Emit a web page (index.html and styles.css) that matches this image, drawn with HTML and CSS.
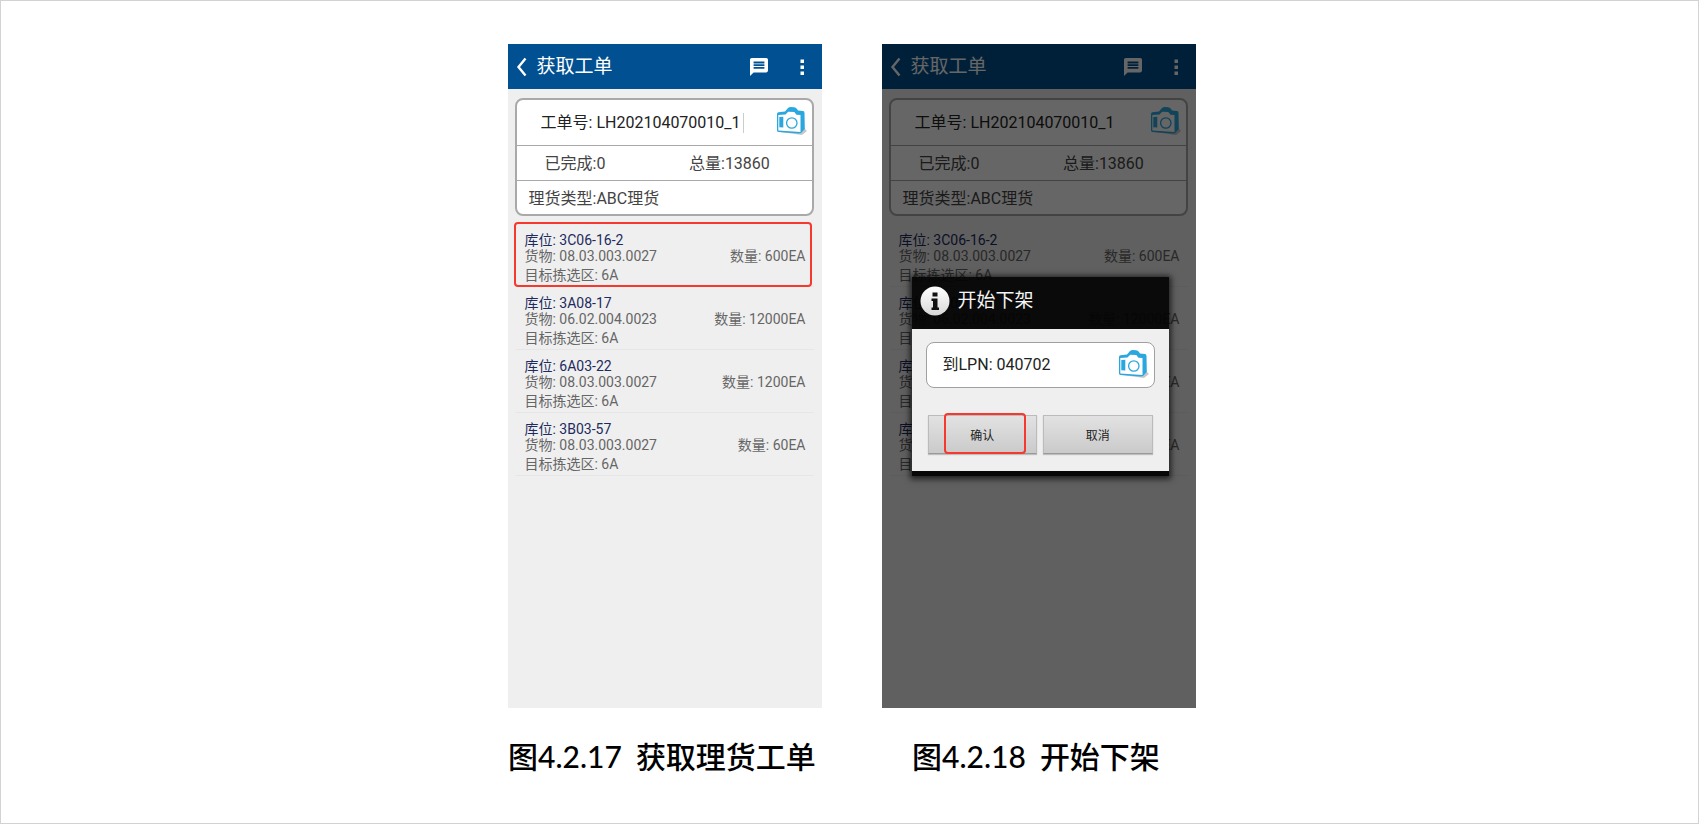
FILE: index.html
```
<!DOCTYPE html>
<html lang="zh-CN">
<head>
    <meta charset="UTF-8">
    <meta name="viewport" content="width=device-width, initial-scale=1.0">
    <title>获取工单</title>
    <link rel="stylesheet" href="styles.css">
</head>
<body>
    <!-- Общие иконки -->
    <svg class="sprite" aria-hidden="true">
        <symbol id="icon-back" viewBox="0 0 12 20">
            <path d="M9.5 1.5 L2.5 10 L9.5 18.5" fill="none" stroke="currentColor" stroke-width="2.4"/>
        </symbol>
        <symbol id="icon-message" viewBox="2 2 20 20">
            <path fill="currentColor" d="M20 2H4c-1.1 0-2 .9-2 2v18l4-4h14c1.1 0 2-.9 2-2V4c0-1.100-.9-2-2-2zm-2 12H6v-2h12v2zm0-3H6V9h12v2zm0-3H6V6h12v2z"/>
        </symbol>
        <symbol id="icon-more" viewBox="0 0 4 18">
            <path fill="currentColor" d="M.5 1.500h3.500V5H.5zM.5 7.500h3.500V11H.5zM.5 13.500h3.500V17H.5z"/>
        </symbol>
        <symbol id="icon-camera" viewBox="0 0 32 30">
            <path d="M4 26 L26 29 L31 25 L28 22 Z" fill="#000" opacity=".22"/>
            <path d="M1 8 Q1 6.500 2.500 6.300 L9 5.500 L12 2 Q13 1 15 1 L18 1.200 Q20 1.500 21 3 L22 4.500 L27 5 Q28.500 5.200 28.500 7 L28.800 23 L25 27 Q24 27.500 22.500 27.400 L2.500 26 Q1 25.800 1 24.500 Z" fill="#2ba7df"/>
            <path d="M2.300 9 L9.500 8.500 L12.200 5.700 L18.300 5.900 L20.500 8.800 L24.500 9 L24.500 26 L2.300 24.500 Z" fill="#fff"/>
            <path d="M3.300 11 L7.300 10.800 L7.300 21.500 L3.300 21.200 Z" fill="#2ba7df"/>
            <circle cx="15.800" cy="17" r="5.200" fill="#fff" stroke="#2ba7df" stroke-width="1.300"/>
        </symbol>
    </svg>

    <main>
        <figure>
            <div class="phone">
                <header>
                    <button type="button" class="icon-btn back" aria-label="返回"><svg><use href="#icon-back"/></svg></button>
                    <h1>获取工单</h1>
                    <button type="button" class="icon-btn message" aria-label="消息"><svg><use href="#icon-message"/></svg></button>
                    <button type="button" class="icon-btn more" aria-label="更多"><svg><use href="#icon-more"/></svg></button>
                </header>
                <section class="order">
                    <div class="order-row order-number">
                        <label for="order1">工单号:</label>
                        <input type="text" id="order1" class="active" value="LH202104070010_1">
                        <button type="button" class="icon-btn camera" aria-label="扫描"><svg><use href="#icon-camera"/></svg></button>
                    </div>
                    <div class="order-row order-total">
                        <span>已完成:0</span>
                        <span>总量:13860</span>
                    </div>
                    <div class="order-row order-type">理货类型:ABC理货</div>
                </section>
                <ul class="tasks">
                    <li class="marked">
                        <p class="place">库位: 3C06-16-2</p>
                        <p class="goods"><span>货物: 08.03.003.0027</span><span>数量: 600EA</span></p>
                        <p class="target">目标拣选区: 6A</p>
                    </li>
                    <li>
                        <p class="place">库位: 3A08-17</p>
                        <p class="goods"><span>货物: 06.02.004.0023</span><span>数量: 12000EA</span></p>
                        <p class="target">目标拣选区: 6A</p>
                    </li>
                    <li>
                        <p class="place">库位: 6A03-22</p>
                        <p class="goods"><span>货物: 08.03.003.0027</span><span>数量: 1200EA</span></p>
                        <p class="target">目标拣选区: 6A</p>
                    </li>
                    <li>
                        <p class="place">库位: 3B03-57</p>
                        <p class="goods"><span>货物: 08.03.003.0027</span><span>数量: 60EA</span></p>
                        <p class="target">目标拣选区: 6A</p>
                    </li>
                </ul>
            </div>
            <figcaption><span>图4.2.17</span><span>获取理货工单</span></figcaption>
        </figure>

        <figure>
            <div class="phone">
                <header>
                    <button type="button" class="icon-btn back" aria-label="返回"><svg><use href="#icon-back"/></svg></button>
                    <h1>获取工单</h1>
                    <button type="button" class="icon-btn message" aria-label="消息"><svg><use href="#icon-message"/></svg></button>
                    <button type="button" class="icon-btn more" aria-label="更多"><svg><use href="#icon-more"/></svg></button>
                </header>
                <section class="order">
                    <div class="order-row order-number">
                        <label for="order2">工单号:</label>
                        <input type="text" id="order2" value="LH202104070010_1">
                        <button type="button" class="icon-btn camera" aria-label="扫描"><svg><use href="#icon-camera"/></svg></button>
                    </div>
                    <div class="order-row order-total">
                        <span>已完成:0</span>
                        <span>总量:13860</span>
                    </div>
                    <div class="order-row order-type">理货类型:ABC理货</div>
                </section>
                <ul class="tasks">
                    <li>
                        <p class="place">库位: 3C06-16-2</p>
                        <p class="goods"><span>货物: 08.03.003.0027</span><span>数量: 600EA</span></p>
                        <p class="target">目标拣选区: 6A</p>
                    </li>
                    <li>
                        <p class="place">库位: 3A08-17</p>
                        <p class="goods"><span>货物: 06.02.004.0023</span><span>数量: 12000EA</span></p>
                        <p class="target">目标拣选区: 6A</p>
                    </li>
                    <li>
                        <p class="place">库位: 6A03-22</p>
                        <p class="goods"><span>货物: 08.03.003.0027</span><span>数量: 1200EA</span></p>
                        <p class="target">目标拣选区: 6A</p>
                    </li>
                    <li>
                        <p class="place">库位: 3B03-57</p>
                        <p class="goods"><span>货物: 08.03.003.0027</span><span>数量: 60EA</span></p>
                        <p class="target">目标拣选区: 6A</p>
                    </li>
                </ul>
                <div class="overlay"></div>
                <form class="dialog" role="dialog" aria-labelledby="dialog-title">
                    <div class="dialog-head">
                        <svg class="info" viewBox="0 0 30 30" aria-hidden="true">
                            <defs>
                                <linearGradient id="info-fill" x1="0" y1="0" x2="0" y2="1">
                                    <stop offset="0" stop-color="#fff"/>
                                    <stop offset="1" stop-color="#d8d8d8"/>
                                </linearGradient>
                            </defs>
                            <circle cx="15" cy="15" r="14.500" fill="url(#info-fill)"/>
                            <path d="M12.500 6.500h5v4h-5zM11.500 12.500h6v9h1.500V24h-7.500v-2.500h1.500v-6.500h-1.500z" fill="#111"/>
                        </svg>
                        <h2 id="dialog-title">开始下架</h2>
                    </div>
                    <div class="dialog-body">
                        <div class="lpn">
                            <label for="lpn">到LPN:</label>
                            <input type="text" id="lpn" value="040702">
                            <button type="button" class="icon-btn camera" aria-label="扫描"><svg><use href="#icon-camera"/></svg></button>
                        </div>
                        <div class="actions">
                            <button type="button" class="btn marked">确认</button>
                            <button type="button" class="btn">取消</button>
                        </div>
                    </div>
                </form>
            </div>
            <figcaption><span>图4.2.18</span><span>开始下架</span></figcaption>
        </figure>
    </main>
</body>
</html>
```
FILE: styles.css
```
* {
    box-sizing: border-box;
}

body {
    margin: 0;
    min-height: 100vh;
    border: 1px solid #d3d3d3;
    background-color: #fff;
    font-family: Roboto, "Noto Sans CJK SC", sans-serif;
    font-size: 16px;
    color: #444;
}

h1, h2, p, ul, figure {
    margin: 0;
    padding: 0;
}

.sprite {
    position: absolute;
    width: 0;
    height: 0;
}

main {
    display: flex;
    justify-content: center;
    gap: 60px;
    padding: 43px 20px 20px 24px;
}

figure {
    flex: 0 1 314px;
}

.phone {
    position: relative;
    aspect-ratio: 314 / 664;
    background-color: #efefef;
}

header {
    display: flex;
    align-items: center;
    height: 45px;
    padding: 0 18px 0 8px;
    background-color: #005092;
    color: #fff;
}

h1, h2 {
    font-size: 19px;
    font-weight: normal;
    line-height: 24px;
}

h1 {
    flex: 1;
    padding-left: 9px;
}

.icon-btn {
    display: flex;
    padding: 0;
    border: none;
    background: none;
    color: inherit;
    cursor: pointer;
}

.back svg {
    width: 12px;
    height: 20px;
}

.message svg {
    width: 18px;
    height: 18px;
}

.more {
    margin-left: 32px;
}

.more svg {
    width: 4px;
    height: 18px;
}

.camera {
    margin-left: auto;
    padding-bottom: 3px;
}

.camera svg {
    width: 32px;
    height: 30px;
}

/* Карточка задания */
.order {
    margin: 9px 8px 8px 7px;
    border: 2px solid #a9a9a9;
    border-radius: 8px;
    background-color: #fff;
}

.order-row {
    display: flex;
    align-items: center;
    height: 35px;
    padding-bottom: 2px;
    border-bottom: 1px solid #a9a9a9;
}

.order-row:last-child {
    height: 33px;
    border-bottom: none;
}

.order-row.order-number {
    height: 46px;
    padding: 0 4px 0 24px;
    color: #222;
}

.order-total span {
    flex: 1;
    padding-left: 28px;
}

.order-total span:last-child {
    padding-left: 22px;
}

.order-type {
    padding-left: 12px;
}

label {
    margin-right: 4px;
    line-height: 20px;
}

input {
    width: 148px;
    height: 20px;
    padding: 0;
    border: none;
    outline: none;
    background: none;
    font: inherit;
    line-height: 20px;
    color: inherit;
}

input.active {
    border-right: 1px solid #ccc;
}

/* Список позиций */
.tasks {
    margin: 0 8px;
    list-style: none;
    font-size: 14px;
    color: #666;
}

.tasks li {
    position: relative;
    padding: 8px 8px 0 9px;
    border-bottom: 1px solid #e6e6e6;
}

.place {
    line-height: 16px;
    color: #1d2b5e;
}

.goods {
    display: flex;
    justify-content: space-between;
    line-height: 17px;
}

.target {
    line-height: 21px;
}

.marked::after {
    content: "";
    position: absolute;
    border: 2px solid #f5392f;
    border-radius: 4px;
}

li.marked::after {
    top: -2px;
    right: 2px;
    bottom: -1px;
    left: -2px;
}

/* Диалог */
.overlay {
    position: absolute;
    inset: 0;
    background-color: rgba(0, 0, 0, 0.6);
}

.dialog {
    position: absolute;
    top: 233px;
    left: 30px;
    right: 27px;
    border-bottom: 5px solid #080808;
    box-shadow: 0 1px 6px 2px rgba(0, 0, 0, 0.7);
}

.dialog-head {
    display: flex;
    align-items: center;
    gap: 8px;
    height: 52px;
    padding: 0 8px 4px;
    background-color: rgba(4, 4, 4, 0.94);
    color: #f5f5f5;
}

.info {
    width: 30px;
    height: 30px;
}

.dialog-body {
    padding: 13px 14px 17px;
    background-color: #efefef;
}

.lpn {
    display: flex;
    align-items: center;
    height: 46px;
    padding: 0 4px 0 16px;
    border: 1px solid #a0a0a0;
    border-radius: 8px;
    background-color: #fff;
    color: #222;
}

.lpn input {
    flex: 1;
    min-width: 0;
}

.actions {
    display: flex;
    gap: 6px;
    padding: 27px 2px 0;
}

.btn {
    position: relative;
    flex: 1;
    height: 39px;
    border: 1px solid #bbb;
    border-bottom-color: #999;
    background: linear-gradient(#e2e2e2, #cacaca);
    box-shadow: 0 1px 1px rgba(0, 0, 0, 0.2);
    font-family: inherit;
    font-size: 12px;
    color: #222;
    cursor: pointer;
}

.btn.marked::after {
    top: -3px;
    right: 10px;
    bottom: -1px;
    left: 15px;
}

figcaption {
    display: flex;
    justify-content: center;
    gap: 14px;
    padding: 28px 5px 0 0;
    font-family: Lato, "Noto Sans CJK SC", sans-serif;
    font-size: 30px;
    font-weight: 500;
    line-height: 40px;
    white-space: nowrap;
    color: #000;
}
```
